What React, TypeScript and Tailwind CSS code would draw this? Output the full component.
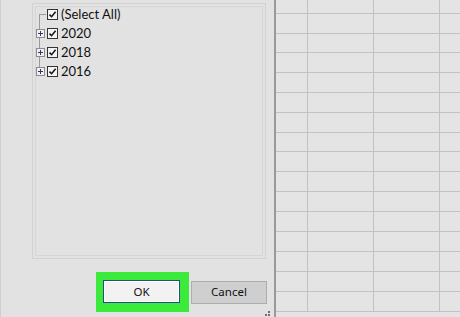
import React from "react";

const rowHeights = [14, 20, 19, 20, 20, 20, 20, 19, 20, 20, 20, 20, 20, 20, 20, 20];

function Check() {
  return (
    <span className="flex h-[11px] w-[11px] items-center justify-center border border-[#333] bg-[#f4f4f4]">
      <svg width="9" height="9" viewBox="0 0 9 9">
        <path d="M1.5 4.6 L3.6 6.7 L7.6 1.8" fill="none" stroke="#111" strokeWidth="1.5" />
      </svg>
    </span>
  );
}

function Plus() {
  return (
    <span className="flex h-[9px] w-[9px] items-center justify-center border border-[#8c8c8c] bg-[#f0f0f0]">
      <svg width="7" height="7" viewBox="0 0 7 7">
        <path d="M1 3.5 H6 M3.5 1 V6" stroke="#2b3a67" strokeWidth="1" />
      </svg>
    </span>
  );
}

function TreeRow({ label, expandable }: { label: string; expandable: boolean }) {
  return (
    <div className="relative flex h-[19px] items-center">
      <div className="flex w-[11px] justify-center">{expandable ? <Plus /> : null}</div>
      <div className="ml-[1px]"><Check /></div>
      <span
        className="ml-[3px] text-[13px] leading-none text-[#111]"
        style={{ fontFamily: 'Lato, "Noto Sans", sans-serif' }}
      >
        {label}
      </span>
    </div>
  );
}

export default function App() {
  return (
    <div
      className="flex h-[317px] w-[460px] overflow-hidden bg-[#e3e3e3]"
      style={{ fontFamily: '"Noto Sans", "Open Sans", sans-serif' }}
    >
      <div className="relative flex w-[274px] shrink-0 flex-col border-l border-[#cfcfcf] bg-[#e2e2e2]">
        <div className="ml-[31px] mt-[3px] h-[256px] w-[234px] border border-[#d2d2d2] p-[2px]">
          <div className="h-full w-full border border-[#d6d6d6]">
            <div className="relative ml-[-1px] mt-[-2px]">
              <div className="absolute left-[4px] top-[9px] h-[58px] w-px bg-[#9a9a9a]" />
              <div className="absolute left-[4px] top-[9px] h-px w-[7px] bg-[#9a9a9a]" />
              <TreeRow label="(Select All)" expandable={false} />
              <TreeRow label="2020" expandable />
              <TreeRow label="2018" expandable />
              <TreeRow label="2016" expandable />
            </div>
          </div>
        </div>
        <div className="ml-[95px] mt-[13px] flex items-center">
          <div className="flex h-[40px] w-[93px] items-start bg-[#3bea3b] pl-[7px] pt-[8px]">
            <button className="flex h-[23px] w-[77px] items-center justify-center border border-[#1f4f86] bg-[#f2f2f2] text-[11.5px] text-[#111] shadow-[inset_0_0_0_1px_#ffffff]">
              OK
            </button>
          </div>
          <button className="ml-[2px] flex h-[23px] w-[76px] items-center justify-center border border-[#adadad] bg-[#cfcfcf] text-[11.5px] text-[#111]">
            Cancel
          </button>
        </div>
        <div className="absolute bottom-[1px] right-[4px] grid grid-cols-2 gap-[1px]">
          <span className="h-[2px] w-[2px]" />
          <span className="h-[2px] w-[2px] bg-[#707070]" />
          <span className="h-[2px] w-[2px] bg-[#707070]" />
          <span className="h-[2px] w-[2px] bg-[#707070]" />
        </div>
      </div>
      <div className="flex flex-1 flex-col border-l-2 border-[#9a9a9a] bg-[#e4e4e4]">
        {rowHeights.map((h, i) => (
          <div
            key={i}
            className="flex shrink-0 border-b border-[#c2c2c2]"
            style={{ height: h }}
          >
            <div className="w-[32px] shrink-0 border-r border-[#c2c2c2]" />
            <div className="w-[66px] shrink-0 border-r border-[#c2c2c2]" />
            <div className="w-[66px] shrink-0 border-r border-[#c2c2c2]" />
            <div className="flex-1" />
          </div>
        ))}
      </div>
    </div>
  );
}
